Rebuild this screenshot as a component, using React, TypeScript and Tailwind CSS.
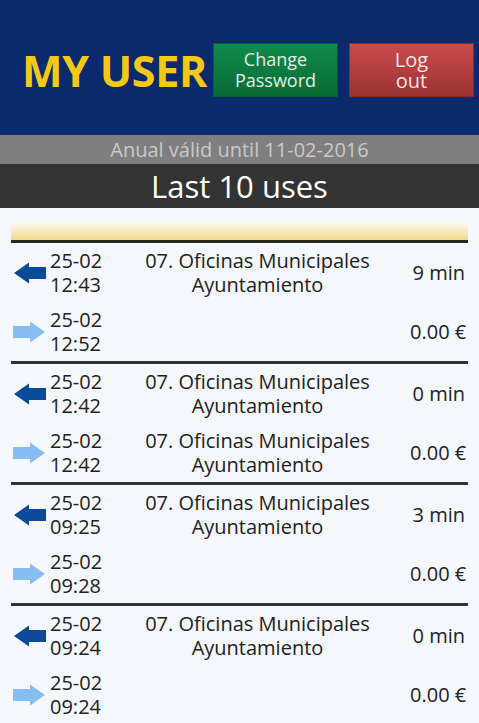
import type { ReactNode } from "react";

type Use = {
  inDate: string;
  inTime: string;
  outDate: string;
  outTime: string;
  inPlace?: string;
  outPlace?: string;
  minutes: string;
  cost: string;
};

const uses: Use[] = [
  { inDate: "25-02", inTime: "12:43", outDate: "25-02", outTime: "12:52", inPlace: "07. Oficinas Municipales|Ayuntamiento", minutes: "9 min", cost: "0.00 €" },
  { inDate: "25-02", inTime: "12:42", outDate: "25-02", outTime: "12:42", inPlace: "07. Oficinas Municipales|Ayuntamiento", outPlace: "07. Oficinas Municipales|Ayuntamiento", minutes: "0 min", cost: "0.00 €" },
  { inDate: "25-02", inTime: "09:25", outDate: "25-02", outTime: "09:28", inPlace: "07. Oficinas Municipales|Ayuntamiento", minutes: "3 min", cost: "0.00 €" },
  { inDate: "25-02", inTime: "09:24", outDate: "25-02", outTime: "09:24", inPlace: "07. Oficinas Municipales|Ayuntamiento", minutes: "0 min", cost: "0.00 €" },
];

function ArrowLeft() {
  return (
    <svg width="34" height="22" viewBox="0 0 34 22">
      <path d="M1 11 L16 0.5 L16 5 L33 5 L33 17 L16 17 L16 21.5 Z" fill="#0b4a9b" />
    </svg>
  );
}

function ArrowRight() {
  return (
    <svg width="34" height="22" viewBox="0 0 34 22">
      <path d="M32 11 L17 0.5 L17 5 L0 5 L0 17 L17 17 L17 21.5 Z" fill="#86bdf2" />
    </svg>
  );
}

function Row({ icon, date, time, place, right }: { icon: ReactNode; date: string; time: string; place?: string; right: string }) {
  return (
    <div className="flex h-[59px] items-center text-[20px] leading-[24px] text-[#222]">
      <div className="flex w-[39px] items-center pl-[2px]">{icon}</div>
      <div className="w-[55px]">
        <div>{date}</div>
        <div>{time}</div>
      </div>
      <div className="flex-1 text-center">
        {place && place.split("|").map((line) => <div key={line}>{line}</div>)}
      </div>
      <div className="w-[58px] whitespace-nowrap pr-[3px] text-right">{right}</div>
    </div>
  );
}

export default function App() {
  return (
    <div className="min-h-[723px] bg-[#f5f8fc] font-['Open_Sans',sans-serif]">
      <header className="flex h-[135px] items-center bg-[#0b2a6d] pr-[5px]">
        <h1 className="ml-[22px] mt-[6px] whitespace-nowrap text-[43px] font-bold leading-none tracking-[-0.3px] text-[#f6c816]">MY USER</h1>
        <div className="ml-auto mt-[5px] flex shrink-0 gap-[11px]">
          <button
            type="button"
            className="flex h-[54px] w-[125px] flex-col items-center justify-center border border-[#0a5c31] bg-gradient-to-b from-[#0e8c4c] to-[#0a6a36] text-[18px] leading-[21px] text-[#e4efe6]"
          >
            <span>Change</span>
            <span>Password</span>
          </button>
          <button
            type="button"
            className="flex h-[54px] w-[125px] flex-col items-center justify-center border border-[#8a2c2c] bg-gradient-to-b from-[#c94b4b] to-[#9e3232] text-[20px] leading-[21px] text-[#f4e6e6]"
          >
            <span>Log</span>
            <span>out</span>
          </button>
        </div>
      </header>
      <div className="h-[29px] bg-[#7f7f7f] text-center text-[20px] leading-[29px] text-[#c9c9c9]">
        Anual válid until 11-02-2016
      </div>
      <div className="h-[44px] bg-[#333333] text-center text-[31px] leading-[44px] text-white">Last 10 uses</div>
      <main className="px-[11px] pt-[14px]">
        <div className="h-[21px] border-b-[3px] border-[#2b2a1f] bg-gradient-to-b from-[#fdfbf1] to-[#f1da8a]" />
        {uses.map((u, i) => (
          <div key={i} className={i < uses.length - 1 ? "border-b-[3px] border-[#333]" : ""}>
            <Row icon={<ArrowLeft />} date={u.inDate} time={u.inTime} place={u.inPlace} right={u.minutes} />
            <Row icon={<ArrowRight />} date={u.outDate} time={u.outTime} place={u.outPlace} right={u.cost} />
          </div>
        ))}
      </main>
    </div>
  );
}
